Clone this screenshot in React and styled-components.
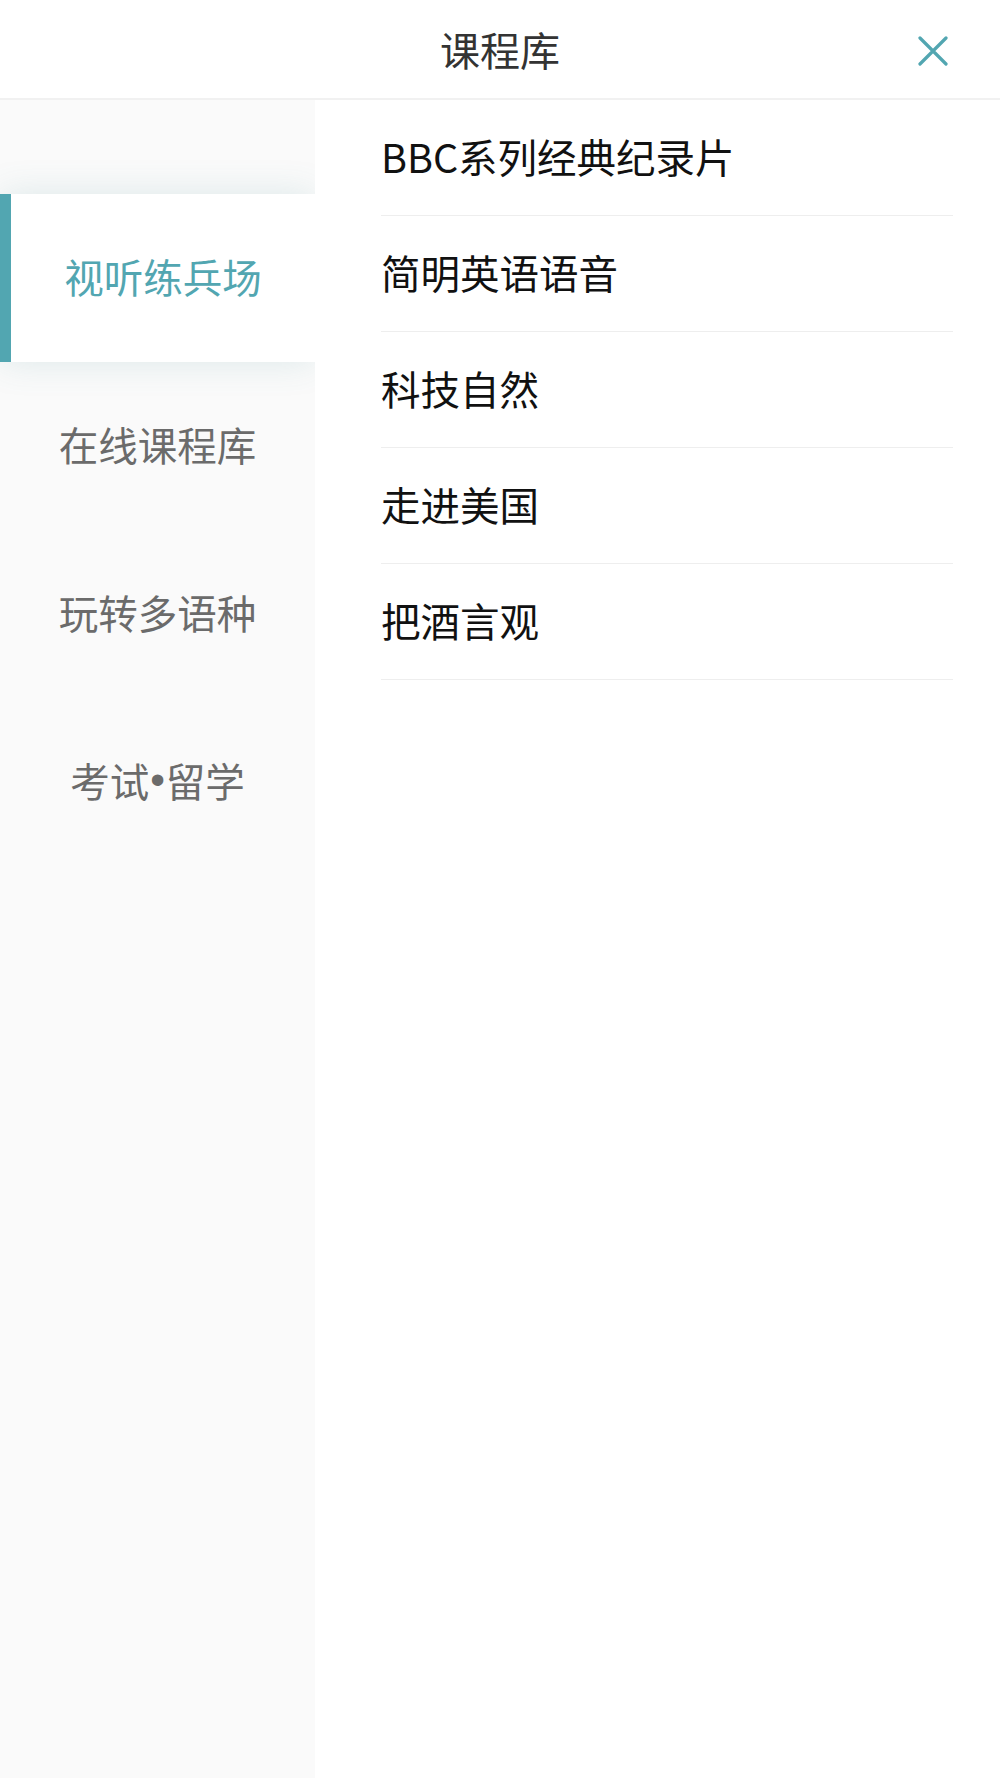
import React from "react";
import styled, { createGlobalStyle } from "styled-components";

const Global = createGlobalStyle`
  html, body { margin: 0; padding: 0; background: #ffffff; }
  body { font-family: "Noto Sans CJK SC", "Noto Sans", sans-serif; }
  * { box-sizing: border-box; }
`;

const TEAL = "#52a6b1";

const Page = styled.div`
  width: 1000px;
  min-height: 1778px;
  display: flex;
  flex-direction: column;
  background: #fff;
`;

const Header = styled.header`
  height: 100px;
  flex: none;
  display: flex;
  align-items: center;
  justify-content: center;
  position: relative;
  border-bottom: 2px solid #f1f1f1;
`;

const Title = styled.h1`
  margin: 0;
  font-size: 40px;
  font-weight: 400;
  color: #333;
  line-height: 1;
`;

const CloseButton = styled.button`
  position: absolute;
  right: 52px;
  top: 36px;
  width: 30px;
  height: 30px;
  padding: 0;
  border: none;
  background: none;
  display: flex;
  align-items: center;
  justify-content: center;
`;

const Body = styled.div`
  flex: 1;
  display: flex;
`;

const Sidebar = styled.nav`
  width: 315px;
  flex: none;
  background: #fafafa;
  padding-top: 94px;
  overflow: hidden;
  display: flex;
  flex-direction: column;
`;

const SideItem = styled.div`
  height: 168px;
  padding-bottom: 4px;
  display: flex;
  align-items: center;
  justify-content: center;
  font-size: 39.5px;
  line-height: 1;
  color: ${(p) => (p.$active ? TEAL : "#6b6b6b")};
  background: ${(p) => (p.$active ? "#fff" : "transparent")};
  border-left: ${(p) => (p.$active ? `11px solid ${TEAL}` : "none")};
  box-shadow: ${(p) => (p.$active ? "0 0 34px rgba(70, 140, 150, 0.16)" : "none")};
  position: relative;
  z-index: ${(p) => (p.$active ? 1 : 0)};
`;

const Dot = styled.span`
  font-family: "Liberation Sans", Arial, sans-serif;
  font-size: 42px;
  margin: 0 1px;
`;

const List = styled.ul`
  flex: 1;
  margin: 0;
  padding: 0 47px 0 66px;
  list-style: none;
`;

const Row = styled.li`
  height: 116px;
  padding-bottom: 4px;
  display: flex;
  align-items: center;
  border-bottom: 1.5px solid #eeeeee;
  font-size: 39.5px;
  line-height: 1;
  color: #111;
`;

const categories = ["视听练兵场", "在线课程库", "玩转多语种", "考试•留学"];
const courses = ["BBC系列经典纪录片", "简明英语语音", "科技自然", "走进美国", "把酒言观"];

function renderLabel(text) {
  const parts = text.split("•");
  if (parts.length === 1) return text;
  return (
    <>
      {parts[0]}
      <Dot>•</Dot>
      {parts[1]}
    </>
  );
}

export default function App() {
  return (
    <Page>
      <Global />
      <Header>
        <Title>课程库</Title>
        <CloseButton aria-label="关闭">
          <svg width="30" height="30" viewBox="0 0 30 30">
            <path d="M2 2 L28 28 M28 2 L2 28" stroke={TEAL} strokeWidth="3.2" strokeLinecap="round" fill="none" />
          </svg>
        </CloseButton>
      </Header>
      <Body>
        <Sidebar>
          {categories.map((c, i) => (
            <SideItem key={c} $active={i === 0}>{renderLabel(c)}</SideItem>
          ))}
        </Sidebar>
        <List>
          {courses.map((c) => (
            <Row key={c}>{c}</Row>
          ))}
        </List>
      </Body>
    </Page>
  );
}
